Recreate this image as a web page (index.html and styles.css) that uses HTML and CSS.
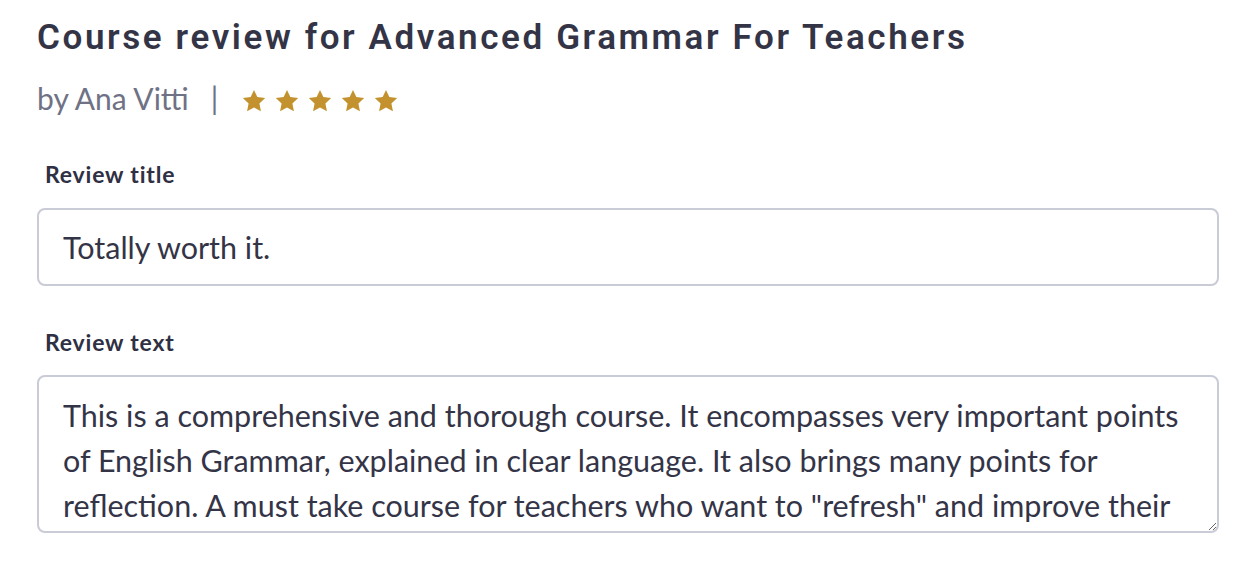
FILE: index.html
```html
<!DOCTYPE html>
<html lang="en">
<head>
<meta charset="utf-8">
<title>Course review</title>
<link rel="stylesheet" href="styles.css">
</head>
<body>
<main class="review">
  <h1 class="title">Course review for Advanced Grammar For Teachers</h1>
  <div class="byline">
    <span class="author">by Ana Vitti</span>
    <span class="sep">|</span>
    <span class="stars">
      <svg class="star" viewBox="0 0 24 24"><path d="M12 1.8l3.1 6.6 7.2.9-5.3 5 1.4 7.1L12 17.9l-6.4 3.5L7 14.3l-5.3-5 7.2-.9z"/></svg>
      <svg class="star" viewBox="0 0 24 24"><path d="M12 1.8l3.1 6.6 7.2.9-5.3 5 1.4 7.1L12 17.9l-6.4 3.5L7 14.3l-5.3-5 7.2-.9z"/></svg>
      <svg class="star" viewBox="0 0 24 24"><path d="M12 1.8l3.1 6.6 7.2.9-5.3 5 1.4 7.1L12 17.9l-6.4 3.5L7 14.3l-5.3-5 7.2-.9z"/></svg>
      <svg class="star" viewBox="0 0 24 24"><path d="M12 1.8l3.1 6.6 7.2.9-5.3 5 1.4 7.1L12 17.9l-6.4 3.5L7 14.3l-5.3-5 7.2-.9z"/></svg>
      <svg class="star" viewBox="0 0 24 24"><path d="M12 1.8l3.1 6.6 7.2.9-5.3 5 1.4 7.1L12 17.9l-6.4 3.5L7 14.3l-5.3-5 7.2-.9z"/></svg>
    </span>
  </div>
  <label class="field-label label-title" for="rtitle">Review title</label>
  <input class="field-input" id="rtitle" type="text" value="Totally worth it.">
  <label class="field-label label-text" for="rtext">Review text</label>
  <textarea class="field-area" id="rtext">This is a comprehensive and thorough course. It encompasses very important points of English Grammar, explained in clear language. It also brings many points for reflection. A must take course for teachers who want to "refresh" and improve their knowledge of grammar.</textarea>
</main>
</body>
</html>
```

FILE: styles.css
```css
* { box-sizing: border-box; }
html, body { margin: 0; background: #ffffff; }
body {
  font-family: "Lato", "Liberation Sans", sans-serif;
  color: #343447;
}
.review {
  display: flex;
  flex-direction: column;
  padding: 17px 17px 0 37px;
}
.title {
  margin: 0;
  font-family: "Roboto", "Liberation Sans", sans-serif;
  font-weight: 600;
  font-size: 35px;
  line-height: 42px;
  letter-spacing: 2.6px;
  color: #343447;
  white-space: nowrap;
}
.byline {
  display: flex;
  align-items: center;
  margin-top: 21px;
  height: 36px;
}
.author {
  font-size: 30px;
  line-height: 36px;
  font-weight: 400;
  color: #6f7285;
}
.sep {
  font-size: 30px;
  line-height: 36px;
  color: #6f7285;
  margin: 0 23px 0 22px;
}
.stars { display: flex; gap: 7px; margin-top: 6px; }
.star { width: 26px; height: 26px; fill: #c3922e; }
.field-label {
  margin-left: 8px;
  font-size: 23px;
  font-weight: 700;
  line-height: 28px;
  letter-spacing: 0.8px;
  color: #2f3043;
}
.label-title { margin-top: 44px; }
.label-text { margin-top: 42px; }
.field-input, .field-area {
  width: 100%;
  border: 2px solid #c9cbd7;
  border-radius: 8px;
  background: #fff;
  font-family: "Lato", "Liberation Sans", sans-serif;
  font-size: 30.5px;
  color: #343447;
  outline: none;
}
.field-input {
  margin-top: 20px;
  height: 78px;
  padding: 0 24px;
}
.field-area {
  margin-top: 19px;
  height: 158px;
  padding: 16px 24px 0 24px;
  line-height: 45px;
  overflow: hidden;
  resize: vertical;
}
```
